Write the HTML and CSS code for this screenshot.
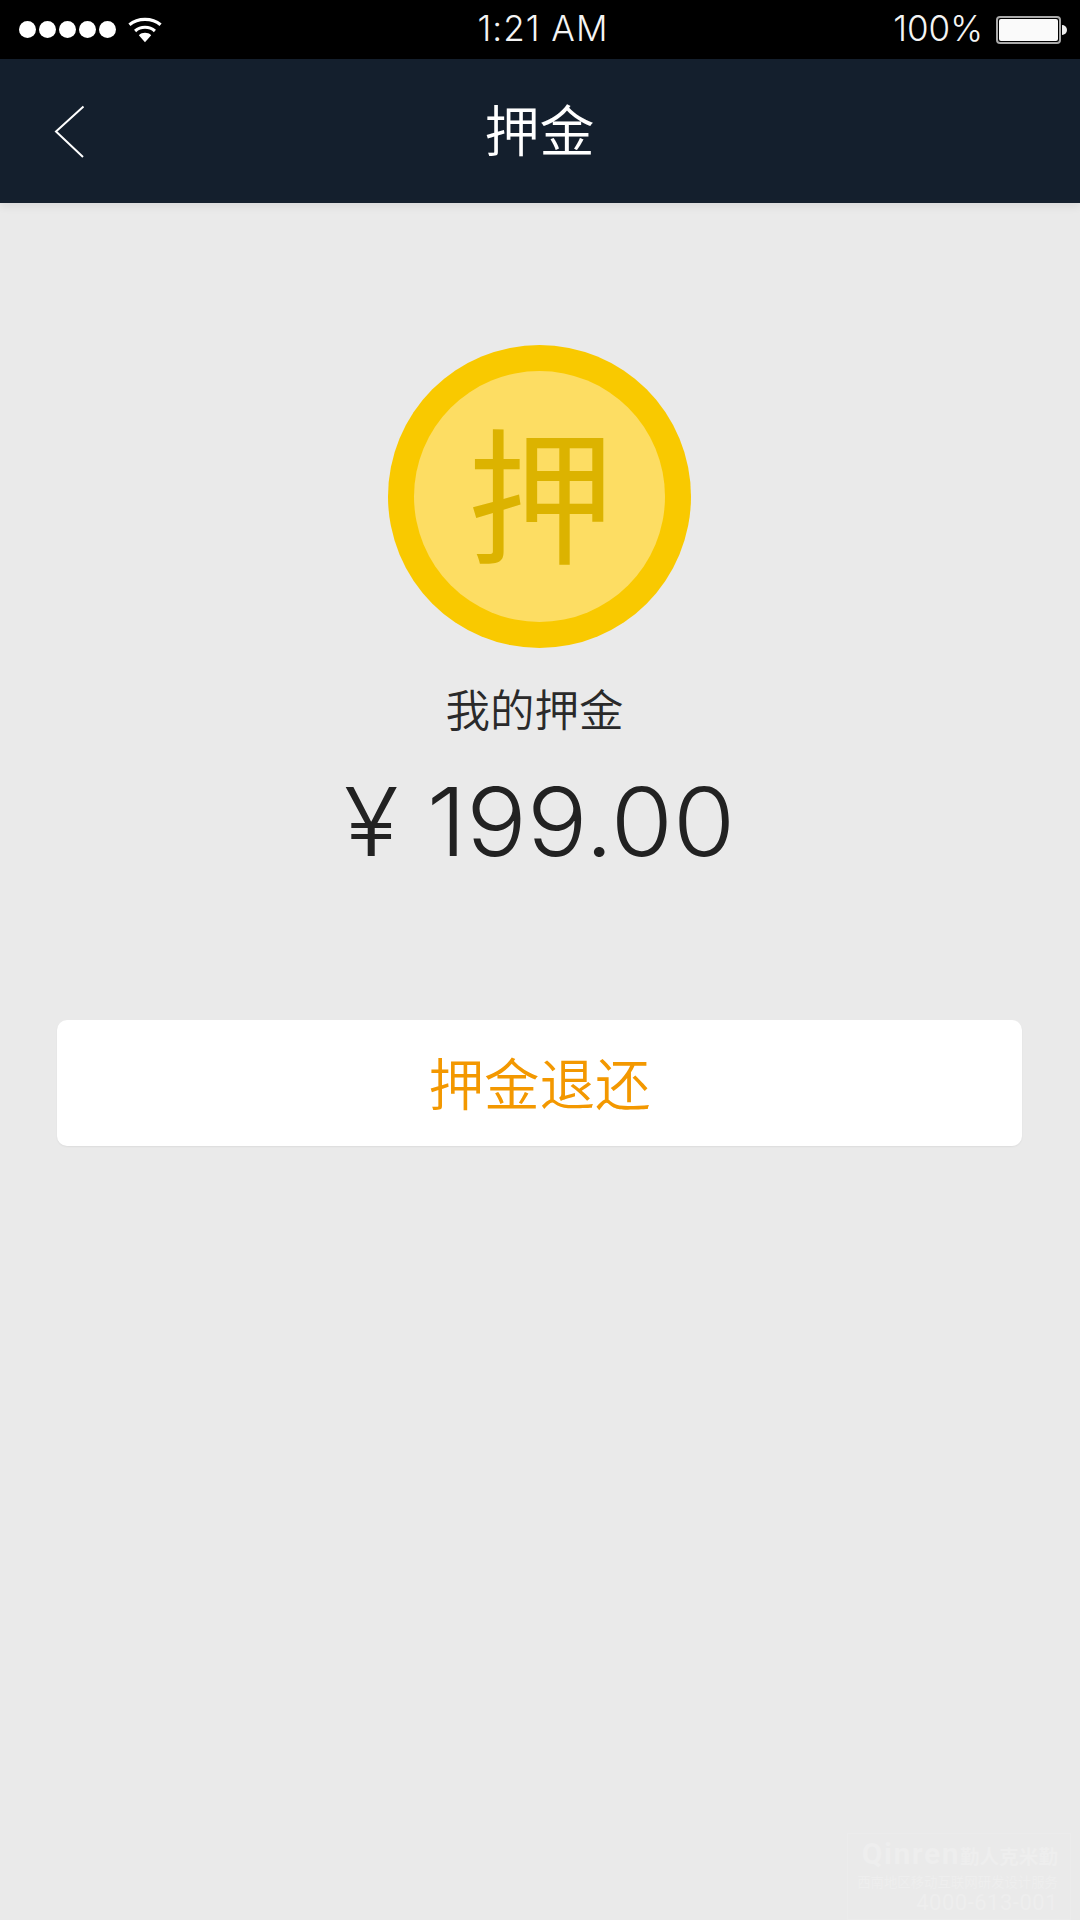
FILE: index.html
```html
<!DOCTYPE html>
<html lang="zh-CN">
<head>
<meta charset="utf-8">
<title>押金</title>
<link rel="stylesheet" href="styles.css">
</head>
<body>
<div class="page">
  <header class="status">
    <div class="status-left">
      <div class="signal"><i></i><i></i><i></i><i></i><i></i></div>
      <svg class="wifi" width="34" height="28" viewBox="0 0 36 28">
        <path d="M1.5 8.5 C10.5 0.8 25.5 0.8 34.5 8.5" fill="none" stroke="#fff" stroke-width="3.4"/>
        <path d="M7.5 15 C13.5 9.8 22.5 9.8 28.5 15" fill="none" stroke="#fff" stroke-width="3.4"/>
        <path d="M11.5 19.5 C15 16.2 21 16.2 24.5 19.5 L18 27 Z" fill="#fff"/>
      </svg>
    </div>
    <div class="status-time">1:21 AM</div>
    <div class="status-right">
      <span class="status-pct">100%</span>
      <div class="battery"><div class="battery-fill"></div></div>
      <div class="battery-tip"></div>
    </div>
  </header>
  <nav class="navbar">
    <svg class="back" width="32" height="54" viewBox="0 0 32 54">
      <path d="M29.5 1.5 L2 26.5 L29 52" fill="none" stroke="#fff" stroke-width="2"/>
    </svg>
    <h1 class="title">押金</h1>
  </nav>
  <main class="content">
    <div class="coin"><div class="coin-inner">押</div></div>
    <div class="label">我的押金</div>
    <div class="amount">¥ 199.00</div>
    <button class="refund"><span class="refund-text">押金退还</span></button>
  </main>
  <aside class="watermark">
    <div class="wm-brand">Qinren<span>勤人克米勤</span></div>
    <div class="wm-line">西南地区移动互联网研发设计服务</div>
    <div class="wm-phone">4000-613-001</div>
  </aside>
</div>
</body>
</html>
```
FILE: styles.css
```css
* { box-sizing: border-box; }
html, body { margin: 0; padding: 0; }
body {
  width: 1080px;
  height: 1920px;
  overflow: hidden;
  background: #eaeaea;
  font-family: "Noto Sans CJK SC", "Noto Sans", sans-serif;
}
.page { position: relative; width: 1080px; height: 1920px; }

.status {
  height: 59px;
  background: #000;
  color: #f4f4f4;
  display: grid;
  grid-template-columns: 1fr auto 1fr;
  align-items: center;
  padding: 0 13px 0 19px;
  font-family: Inter, Roboto, sans-serif;
  font-weight: 300;
  font-size: 35px;
}
.status-left { display: flex; align-items: center; gap: 12px; }
.signal { display: flex; gap: 3px; }
.signal i { width: 17px; height: 17px; border-radius: 50%; background: #fff; display: block; }
.wifi { display: block; }
.status-time { letter-spacing: 1px; padding-bottom: 4px; }
.status-right { display: flex; align-items: center; justify-content: flex-end; }
.status-pct { margin-right: 13px; padding-bottom: 4px; }
.battery {
  width: 65px;
  height: 28px;
  border: 2px solid #aaa;
  border-radius: 4px;
  padding: 1px;
}
.battery-fill { width: 100%; height: 100%; background: #fafafa; border-radius: 2px; }
.battery-tip { width: 5px; height: 10px; background: #eee; border-radius: 0 5px 5px 0; margin-left: 1px; }

.navbar {
  height: 144px;
  background: #141f2d;
  display: flex;
  align-items: center;
  justify-content: center;
  position: relative;
  box-shadow: 0 4px 8px rgba(0, 0, 0, 0.07);
}
.back { position: absolute; left: 54px; top: 46px; }
.title {
  margin: 0 1px 8px 0;
  color: #fff;
  font-size: 55px;
  font-weight: 350;
  line-height: 1;
}

.content { display: flex; flex-direction: column; align-items: center; padding-top: 142px; }
.coin {
  width: 303px;
  height: 303px;
  margin-right: 1px;
  border-radius: 50%;
  background: #f9c900;
  display: flex;
  align-items: center;
  justify-content: center;
}
.coin-inner {
  width: 251px;
  height: 251px;
  border-radius: 50%;
  background: #fddd63;
  color: #dcb300;
  font-size: 146px;
  line-height: 236px;
  text-align: center;
  padding-left: 2px;
}
.label {
  margin-top: 28px;
  margin-right: 11px;
  font-size: 44.5px;
  line-height: 64px;
  font-weight: 350;
  color: #2a2a2a;
}
.amount {
  margin-top: 24px;
  font-family: Inter, Roboto, sans-serif;
  font-weight: 300;
  font-size: 95px;
  line-height: 116px;
  color: #222;
  transform: scaleX(1.06);
}
.refund {
  margin-top: 140px;
  margin-right: 1px;
  width: 965px;
  height: 126px;
  padding: 0 0 4px;
  border: 0;
  border-radius: 10px;
  background: #fff;
  color: #f39800;
  font-family: inherit;
  font-size: 55.5px;
  font-weight: 350;
  box-shadow: 0 1px 2px rgba(0, 0, 0, 0.06);
}

.watermark {
  position: absolute;
  left: 847px;
  top: 1833px;
  width: 224px;
  height: 87px;
  border: 1px solid #ececec;
  padding: 4px 12px 0 8px;
  color: #eeeeee;
  text-align: right;
  font-size: 13.4px;
  line-height: 18px;
  white-space: nowrap;
  overflow: hidden;
}
.wm-brand { font-family: Roboto, sans-serif; font-weight: 700; font-size: 30px; line-height: 32px; letter-spacing: 1.5px; }
.wm-brand span { font-family: "Noto Sans CJK SC", sans-serif; font-size: 19.6px; letter-spacing: 0; }
.wm-phone { font-family: Roboto, sans-serif; font-size: 22px; line-height: 26px; letter-spacing: 0.5px; }
```
